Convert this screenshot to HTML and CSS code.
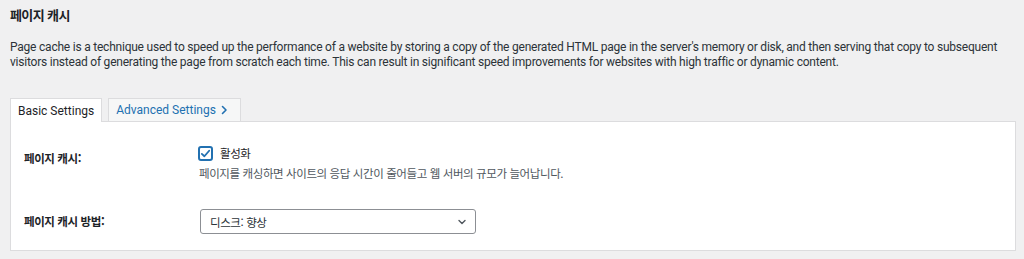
FILE: index.html
```html
<!DOCTYPE html>
<html lang="ko">

<head>
    <meta charset="UTF-8">
    <meta name="viewport" content="width=device-width, initial-scale=1.0">
    <title>페이지 캐시</title>
    <link rel="stylesheet" href="styles.css">
</head>

<body>
    <div class="wrap">
        <h2 class="page-title ko">페이지 캐시</h2>
        <p class="page-desc">Page cache is a technique used to speed up the performance of a website by storing a copy of the generated HTML page in the server's memory or disk, and then serving that copy to subsequent visitors instead of generating the page from scratch each time. This can result in significant speed improvements for websites with high traffic or dynamic content.</p>

        <div class="tabs">
            <a class="tab active" href="#">Basic Settings</a>
            <a class="tab" href="#">Advanced Settings
                <svg class="tab-arrow" width="7" height="10" viewBox="0 0 7 10"><path d="M1.5 1.5 L5 5 L1.5 8.5" fill="none" stroke="#2271b1" stroke-width="1.6" stroke-linecap="round" stroke-linejoin="round"/></svg>
            </a>
        </div>

        <div class="panel">
            <div class="row">
                <div class="row-label ko first">페이지 캐시:</div>
                <div class="row-field">
                    <label class="check">
                        <span class="check-box">
                            <svg width="11" height="11" viewBox="0 0 12 12"><path d="M2 6.4 L4.8 9 L10 3" fill="none" stroke="#2271b1" stroke-width="2" stroke-linecap="round" stroke-linejoin="round"/></svg>
                        </span>
                        <span class="ko">활성화</span>
                    </label>
                    <p class="field-desc ko">페이지를 캐싱하면 사이트의 응답 시간이 줄어들고 웹 서버의 규모가 늘어납니다.</p>
                </div>
            </div>
            <div class="row second">
                <div class="row-label ko">페이지 캐시 방법:</div>
                <div class="row-field">
                    <div class="select">
                        <span class="ko">디스크: 향상</span>
                        <svg width="10" height="10" viewBox="0 0 10 10"><path d="M2 3.5 L5 6.5 L8 3.5" fill="none" stroke="#50575e" stroke-width="1.4" stroke-linecap="round" stroke-linejoin="round"/></svg>
                    </div>
                </div>
            </div>
        </div>
    </div>
</body>

</html>
```

FILE: styles.css
```css
body {
    margin: 0;
    background: #f0f0f1;
    color: #1d2327;
    font-family: Roboto, "Noto Sans CJK KR", sans-serif;
    font-size: 12px;
}

.ko {
    font-family: "Noto Sans CJK KR", sans-serif;
    font-size: 11.5px;
    letter-spacing: -0.4px;
}

.wrap {
    padding: 5px 8px 0 10px;
}

.page-title {
    margin: 0;
    font-size: 13px;
    letter-spacing: -0.6px;
    font-weight: 600;
    line-height: 20px;
}

.page-desc {
    margin: 15px 0 0;
    line-height: 15px;
    letter-spacing: -0.22px;
    color: #2c3338;
}

.tabs {
    display: flex;
    gap: 6px;
    margin-top: 28px;
    margin-bottom: -1px;
}

.tab {
    display: flex;
    align-items: center;
    gap: 5px;
    padding: 0 7px;
    height: 22px;
    border: 1px solid #dcdcde;
    border-bottom: none;
    background: #f6f7f7;
    color: #2271b1;
    text-decoration: none;
}

.tab.active {
    background: #fff;
    color: #1d2327;
    position: relative;
    height: 23px;
}

.tab-arrow {
    margin-right: 5px;
}

.panel {
    background: #fff;
    border: 1px solid #dcdcde;
    padding: 23px 13px 16px;
}

.row {
    display: grid;
    grid-template-columns: 174px 1fr;
}

.row.second {
    margin-top: 28px;
}

.row-label {
    font-weight: 600;
    line-height: 24px;
}

.row-label.first {
    margin-top: 1px;
}

.check {
    display: flex;
    align-items: center;
    gap: 7px;
    height: 16px;
    color: #1d2327;
}

.check-box {
    box-sizing: border-box;
    width: 15px;
    height: 15px;
    border: 2px solid #2271b1;
    border-radius: 3px;
    display: flex;
    align-items: center;
    justify-content: center;
}

.field-desc {
    margin: 4px 0 0 1px;
    line-height: 16px;
    color: #50575e;
}

.select {
    box-sizing: border-box;
    width: 276px;
    height: 25px;
    margin-left: 2px;
    border: 1px solid #8c8f94;
    border-radius: 3px;
    display: flex;
    align-items: center;
    justify-content: space-between;
    padding: 0 8px 0 9px;
    color: #2c3338;
}
```
